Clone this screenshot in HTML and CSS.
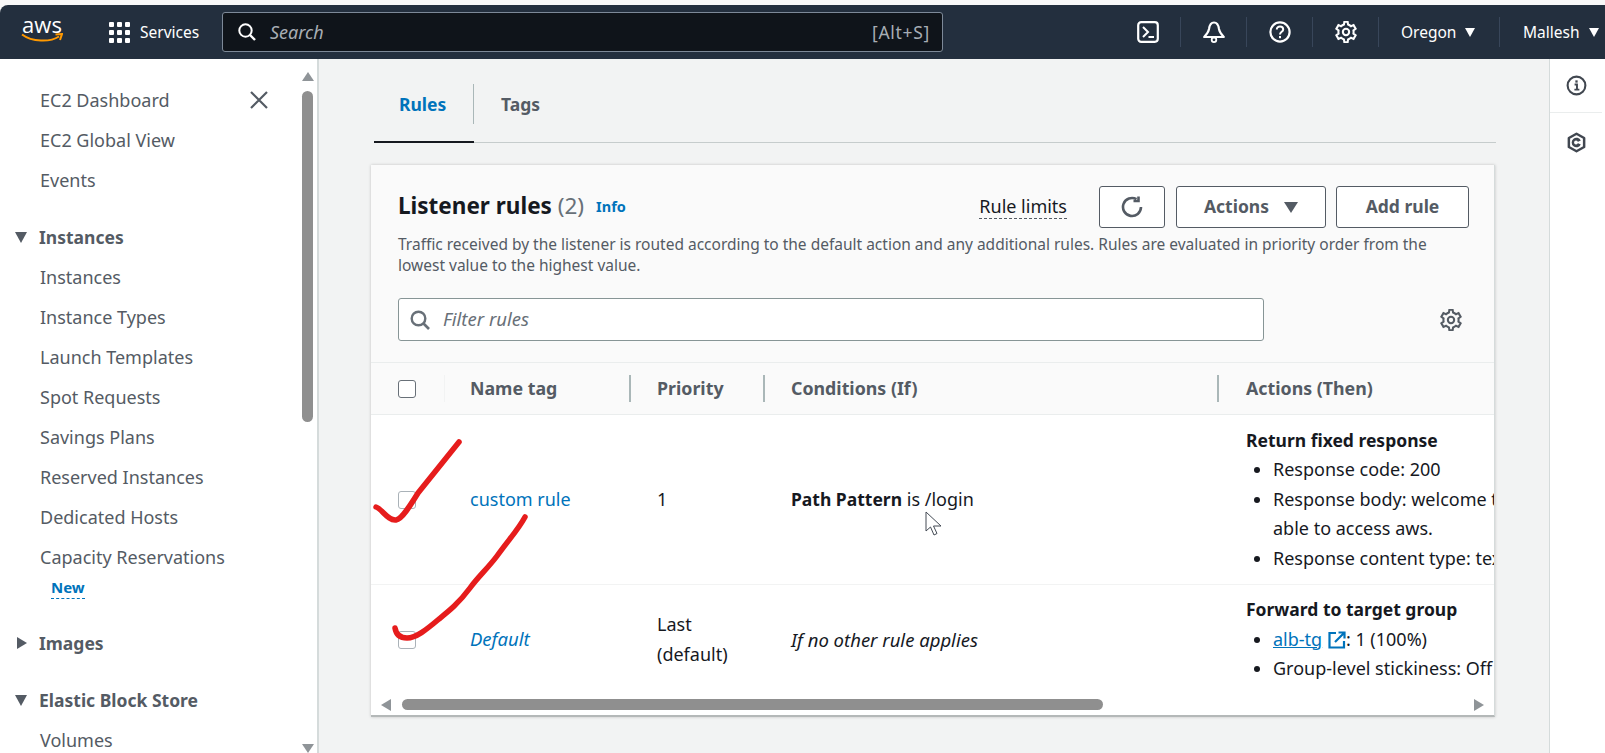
FILE: index.html
```html
<!DOCTYPE html>
<html lang="en">
<head>
    <meta charset="UTF-8">
    <meta name="viewport" content="width=device-width, initial-scale=1.0">
    <title>Listener rules</title>
    <link rel="stylesheet" href="styles.css">
</head>
<body>
<div class="top-strip"></div>
<header class="navbar">
    <div class="logo">
        <span class="logo-text">aws</span>
        <svg class="logo-smile" viewBox="0 0 42 10" width="42" height="10"><path d="M1 1.5C11 9 29 9.5 38 3.5" fill="none" stroke="#f90" stroke-width="2"/><path d="M34.500 1.500L41 1 39 7" fill="none" stroke="#f90" stroke-width="2"/></svg>
    </div>
    <div class="services">
        <div class="grid-icon"><i></i><i></i><i></i><i></i><i></i><i></i><i></i><i></i><i></i></div>
        <span>Services</span>
    </div>
    <div class="search">
        <svg viewBox="0 0 18 18" width="18" height="18"><circle cx="7.500" cy="7.500" r="6.200" fill="none" stroke="#fff" stroke-width="2"/><path d="M12 12l5 5" stroke="#fff" stroke-width="2.400"/></svg>
        <span class="search-text">Search</span>
        <span class="search-key">[Alt+S]</span>
    </div>
    <div class="nav-right">
        <div class="nav-icon">
            <svg viewBox="0 0 22 22" width="22" height="22"><rect x="1.200" y="1.200" width="19.600" height="19.600" rx="3" fill="none" stroke="#fff" stroke-width="2.200"/><path d="M6 6l5 5-5 5M11.500 16H17" fill="none" stroke="#fff" stroke-width="2"/></svg>
        </div>
        <div class="nav-icon">
            <svg viewBox="0 0 22 22" width="22" height="22"><path d="M11 1.500C7.500 1.500 6.500 4.500 6 8 5.500 11 3.500 13.500 1.200 16H20.800C18.500 13.500 16.500 11 16 8 15.500 4.500 14.500 1.500 11 1.500Z" fill="none" stroke="#fff" stroke-width="2.200" stroke-linejoin="round"/><circle cx="11" cy="18.800" r="2.300" fill="none" stroke="#fff" stroke-width="1.800"/></svg>
        </div>
        <div class="nav-icon">
            <svg viewBox="0 0 22 22" width="22" height="22"><circle cx="11" cy="11" r="9.600" fill="none" stroke="#fff" stroke-width="2.200"/><path d="M7.800 8.500C7.800 6.600 9.300 5.600 11 5.600S14.200 6.700 14.200 8.400C14.200 10.800 11 10.800 11 13.400" fill="none" stroke="#fff" stroke-width="2"/><rect x="10" y="15" width="2" height="2.200" fill="#fff"/></svg>
        </div>
        <div class="nav-icon">
            <svg viewBox="0 0 16 16" width="22" height="22"><path class="gear" d="M13.500 8c0-.4 0-.8-.1-1.200l1.600-1.200-1.500-2.600-1.900.8c-.6-.5-1.300-.9-2.100-1.200L9.200.6H6.800l-.3 2c-.8.3-1.500.7-2.100 1.200l-1.900-.8L1 5.600l1.600 1.200c-.1.4-.1.8-.1 1.200s0 .8.1 1.200L1 10.400l1.500 2.600 1.900-.8c.6.500 1.300.9 2.100 1.200l.3 2h2.400l.3-2c.8-.3 1.500-.7 2.100-1.200l1.900.8 1.500-2.600-1.600-1.200c.1-.4.1-.8.1-1.200z" fill="none" stroke="#fff" stroke-width="1.500"/><circle cx="8" cy="8" r="2.300" fill="none" stroke="#fff" stroke-width="1.500"/></svg>
        </div>
        <div class="nav-menu region">Oregon<b class="caret-down"></b></div>
        <div class="nav-menu user">Mallesh<b class="caret-down"></b></div>
    </div>
</header>

<div class="layout">
    <aside class="sidebar">
        <nav class="side-nav">
            <a class="side-item first">EC2 Dashboard
                <svg class="close-x" viewBox="0 0 18 18" width="18" height="18"><path d="M1 1l16 16M17 1L1 17" stroke="#545b64" stroke-width="2.200"/></svg>
            </a>
            <a class="side-item">EC2 Global View</a>
            <a class="side-item">Events</a>
            <div class="side-head"><b class="tri-down"></b>Instances</div>
            <a class="side-item">Instances</a>
            <a class="side-item">Instance Types</a>
            <a class="side-item">Launch Templates</a>
            <a class="side-item">Spot Requests</a>
            <a class="side-item">Savings Plans</a>
            <a class="side-item">Reserved Instances</a>
            <a class="side-item">Dedicated Hosts</a>
            <a class="side-item">Capacity Reservations</a>
            <div class="side-new"><span>New</span></div>
            <div class="side-head images"><b class="tri-right"></b>Images</div>
            <div class="side-head"><b class="tri-down"></b>Elastic Block Store</div>
            <a class="side-item">Volumes</a>
        </nav>
        <div class="side-scroll">
            <b class="arrow-up"></b>
            <div class="side-thumb"></div>
            <b class="arrow-down"></b>
        </div>
    </aside>

    <main class="content">
        <div class="tabs">
            <div class="tab active">Rules</div>
            <div class="tab">Tags</div>
        </div>

        <section class="card">
            <div class="card-head">
                <div class="title-row">
                    <h2 class="card-title">Listener rules <span class="count">(2)</span></h2>
                    <a class="info">Info</a>
                    <a class="limits">Rule limits</a>
                    <button class="btn btn-refresh">
                        <svg viewBox="0 0 22 22" width="22" height="22"><path d="M20 11A9 9 0 1 1 15.500 3.200" fill="none" stroke="#545b64" stroke-width="2.600"/><path d="M16 .5V5H11" transform="translate(1.500 0)" fill="none" stroke="#545b64" stroke-width="2.600"/></svg>
                    </button>
                    <button class="btn btn-actions">Actions<b class="btn-caret"></b></button>
                    <button class="btn btn-add">Add rule</button>
                </div>
                <p class="desc">Traffic received by the listener is routed according to the default action and any additional rules. Rules are evaluated in priority order from the lowest value to the highest value.</p>
                <div class="filter-row">
                    <div class="filter">
                        <svg viewBox="0 0 20 20" width="20" height="20"><circle cx="8.500" cy="8.500" r="6.800" fill="none" stroke="#687078" stroke-width="2.400"/><path d="M13.500 13.500l5.500 5.500" stroke="#687078" stroke-width="2.600"/></svg>
                        <span>Filter rules</span>
                    </div>
                    <svg class="filter-gear" viewBox="0 0 16 16" width="22" height="22"><path d="M13.500 8c0-.4 0-.8-.1-1.200l1.600-1.200-1.500-2.600-1.900.8c-.6-.5-1.300-.9-2.100-1.200L9.200.6H6.800l-.3 2c-.8.3-1.500.7-2.100 1.200l-1.900-.8L1 5.600l1.600 1.200c-.1.4-.1.8-.1 1.200s0 .8.1 1.200L1 10.400l1.500 2.600 1.900-.8c.6.500 1.300.9 2.100 1.200l.3 2h2.400l.3-2c.8-.3 1.500-.7 2.100-1.200l1.900.8 1.500-2.600-1.600-1.200c.1-.4.1-.8.1-1.200z" fill="none" stroke="#545b64" stroke-width="1.500"/><circle cx="8" cy="8" r="2.300" fill="none" stroke="#545b64" stroke-width="1.500"/></svg>
                </div>
            </div>

            <div class="row row-head">
                <div class="cell c-check"><span class="checkbox"></span></div>
                <div class="cell c-name"><span class="th">Name tag</span></div>
                <div class="cell c-prio"><span class="th">Priority</span></div>
                <div class="cell c-cond"><span class="th">Conditions (If)</span></div>
                <div class="cell c-act"><span class="th">Actions (Then)</span></div>
            </div>

            <div class="row row-one">
                <div class="cell c-check"><span class="checkbox"></span></div>
                <div class="cell c-name"><a class="link">custom rule</a></div>
                <div class="cell c-prio">1</div>
                <div class="cell c-cond"><span><b>Path Pattern</b> is /login</span></div>
                <div class="cell c-act">
                    <div>
                        <b>Return fixed response</b>
                        <ul>
                            <li>Response code: 200</li>
                            <li>Response body: welcome to aws you are able to access aws.</li>
                            <li>Response content type: text/plain</li>
                        </ul>
                    </div>
                </div>
            </div>

            <div class="row row-two">
                <div class="cell c-check"><span class="checkbox"></span></div>
                <div class="cell c-name"><a class="link"><i>Default</i></a></div>
                <div class="cell c-prio">Last<br>(default)</div>
                <div class="cell c-cond"><i>If no other rule applies</i></div>
                <div class="cell c-act">
                    <div>
                        <b>Forward to target group</b>
                        <ul>
                            <li><a class="link under">alb-tg</a>
                                <svg class="ext" viewBox="0 0 18 18" width="18" height="18"><path d="M8 2H1.500V16.500H16V10" fill="none" stroke="#0073bb" stroke-width="2.200"/><path d="M7 11L16 2M10.500 1.500H16.500V7.500" fill="none" stroke="#0073bb" stroke-width="2.200"/></svg>: 1 (100%)</li>
                            <li>Group-level stickiness: Off</li>
                        </ul>
                    </div>
                </div>
            </div>

            <div class="table-scroll">
                <b class="arrow-left"></b>
                <div class="table-thumb"></div>
                <b class="arrow-right"></b>
            </div>
        </section>
    </main>

    <aside class="tools">
        <div class="tool tool-info">
            <svg viewBox="0 0 22 22" width="21" height="21"><circle cx="11" cy="11" r="9.300" fill="none" stroke="#414750" stroke-width="2.200"/><path d="M9 10h2.500v5M8.800 15.300h5.200" fill="none" stroke="#414750" stroke-width="2"/><rect x="9.800" y="5.600" width="2.400" height="2.400" fill="#414750"/></svg>
        </div>
        <div class="tool">
            <svg viewBox="0 0 22 22" width="21" height="21"><path d="M11 1.800L19 6.300V15.700L11 20.200 3 15.700V6.300Z" fill="none" stroke="#414750" stroke-width="2.600" stroke-linejoin="round"/><path d="M15.500 9A5 5 0 1 0 15.500 13L11 11Z" fill="#414750"/><circle cx="10.500" cy="11" r="2" fill="#fff"/></svg>
        </div>
    </aside>
</div>

<!-- red ticks and mouse pointer lie on top of the page -->
<svg class="ticks" viewBox="0 0 1605 753" width="1605" height="753">
    <path d="M376 507C382 509 388 521 396 520 402 519 410 506 418 493L459 442" fill="none" stroke="#e61c1c" stroke-width="5.500" stroke-linecap="round" stroke-linejoin="round"/>
    <path d="M525 517C518 530 510 538 497 556 488 568 478 577 470 588 458 604 449 611 439 619 426 630 416 638 407 638 400 638 396 634 395 628" fill="none" stroke="#e61c1c" stroke-width="5.500" stroke-linecap="round" stroke-linejoin="round"/>
    <path d="M926 512V531L930.500 527 934 535 937 533.500 933.500 526H941Z" fill="#fff" stroke="#444b55" stroke-width="1"/>
</svg>
</body>
</html>
```

FILE: styles.css
```css
* {
    box-sizing: border-box;
}

html,
body {
    margin: 0;
    height: 753px;
    overflow: hidden;
}

body {
    font-family: 'Noto Sans', 'Open Sans', sans-serif;
    font-size: 18px;
    color: #16191f;
    background-color: #f8f8f8;
    position: relative;
}

.top-strip {
    height: 5px;
}

/* top bar */
.navbar {
    height: 54px;
    background-color: #232f3e;
    border-radius: 8px 0 0 0;
    display: flex;
    align-items: center;
    color: #fff;
}

.logo {
    width: 42px;
    margin-left: 21px;
    display: flex;
    flex-direction: column;
    align-items: center;
}

.logo-text {
    font-family: 'Open Sans', sans-serif;
    font-size: 22px;
    line-height: 19px;
    margin-top: -6px;
}

.logo-smile {
    margin-top: -1px;
}

.services {
    display: flex;
    align-items: center;
    margin-left: 46px;
    width: 113px;
    font-size: 15.500px;
    gap: 10px;
}

.grid-icon {
    display: grid;
    grid-template-columns: repeat(3, 5px);
    grid-auto-rows: 5px;
    gap: 3px;
}

.grid-icon i {
    background-color: #fff;
    border-radius: 1px;
}

.search {
    width: 721px;
    height: 40px;
    background-color: #0f141a;
    border: 1px solid #7d8998;
    border-radius: 3px;
    display: flex;
    align-items: center;
    padding: 0 12px 0 15px;
}

.search-text {
    font-style: italic;
    color: #a7adb4;
    margin-left: 14px;
    font-size: 18px;
}

.search-key {
    margin-left: auto;
    color: #a7adb4;
    font-size: 17.500px;
    letter-spacing: 0.7px;
}

.nav-right {
    margin-left: auto;
    display: flex;
    align-items: center;
    height: 30px;
}

.nav-icon {
    width: 66px;
    height: 30px;
    display: flex;
    align-items: center;
    justify-content: center;
    border-right: 1px solid #38465a;
}

.nav-menu {
    display: flex;
    align-items: center;
    height: 30px;
    font-size: 15.500px;
}

.region {
    width: 121px;
    padding-left: 22px;
    border-right: 1px solid #38465a;
}

.user {
    width: 105px;
    padding-left: 23px;
}

.caret-down {
    width: 0;
    height: 0;
    margin-left: 9px;
    border-left: 5px solid transparent;
    border-right: 5px solid transparent;
    border-top: 9px solid #fff;
}

/* page below the bar */
.layout {
    display: flex;
    height: 694px;
    background-color: #f2f3f3;
}

.sidebar {
    width: 319px;
    flex-shrink: 0;
    display: flex;
    background-color: #fff;
    border-right: 2px solid #d5dbdb;
    overflow: hidden;
}

.side-nav {
    flex: 1;
    padding-top: 21px;
}

.side-item {
    display: flex;
    align-items: center;
    justify-content: space-between;
    height: 40px;
    padding-left: 40px;
    color: #545b64;
    font-size: 18px;
    white-space: nowrap;
}

.close-x {
    margin-right: 33px;
}

.side-head {
    display: flex;
    align-items: center;
    height: 40px;
    margin-top: 17px;
    padding-left: 15px;
    color: #545b64;
    font-weight: 700;
    font-size: 17.500px;
}

.side-head.images {
    margin-top: 23px;
}

.tri-down {
    width: 0;
    height: 0;
    margin-right: 12px;
    border-left: 6.500px solid transparent;
    border-right: 6.500px solid transparent;
    border-top: 11px solid #545b64;
}

.tri-right {
    width: 0;
    height: 0;
    margin-left: 2px;
    margin-right: 12px;
    border-top: 6.500px solid transparent;
    border-bottom: 6.500px solid transparent;
    border-left: 10px solid #545b64;
}

.side-new {
    height: 23px;
    padding-left: 51px;
    font-size: 15px;
    line-height: 21px;
    font-weight: 700;
    color: #0073bb;
}

.side-new span {
    display: inline-block;
    border-bottom: 1px dashed #0073bb;
}

.side-scroll {
    width: 13px;
    margin-right: 3px;
    display: flex;
    flex-direction: column;
    align-items: center;
    padding-top: 13px;
}

.arrow-up {
    width: 0;
    height: 0;
    border-left: 6.500px solid transparent;
    border-right: 6.500px solid transparent;
    border-bottom: 9px solid #8f9498;
}

.arrow-down {
    width: 0;
    height: 0;
    margin-top: 322px;
    border-left: 6.500px solid transparent;
    border-right: 6.500px solid transparent;
    border-top: 9px solid #8f9498;
}

.side-thumb {
    width: 11px;
    height: 331px;
    margin-top: 10px;
    background-color: #8f8f8f;
    border-radius: 6px;
}

.content {
    flex: 1;
    padding: 0 53px 0 52px;
}

.tabs {
    display: flex;
    height: 84px;
    margin-left: 3px;
    padding-top: 25px;
    border-bottom: 1px solid #c6cccc;
}

.tab {
    height: 59px;
    padding: 0 27px 19px;
    display: flex;
    align-items: center;
    font-weight: 700;
    font-size: 17.500px;
    color: #545b64;
}

.tab.active {
    position: relative;
    width: 100px;
    padding-left: 25px;
    padding-bottom: 17px;
    color: #0073bb;
    border-bottom: 2px solid #16191f;
}

.tab.active::after {
    content: '';
    position: absolute;
    right: 0;
    top: 0;
    height: 40px;
    border-right: 1px solid #aab7b8;
}

.card {
    margin-top: 22px;
    width: 1124px;
    height: 552px;
    background-color: #fff;
    border-bottom: 2px solid #b4b8b8;
    border-right: 1px solid #d5dbdb;
    box-shadow: 0 0 3px rgba(0, 0, 0, 0.2);
    overflow: hidden;
    display: flex;
    flex-direction: column;
}

.card-head {
    height: 198px;
    padding: 21px 25px 0 27px;
    background-color: #fafafa;
    border-bottom: 1px solid #eaeded;
}

.title-row {
    display: flex;
    align-items: center;
    height: 42px;
}

.card-title {
    margin: -4px 0 0;
    font-size: 22.500px;
    font-weight: 700;
    white-space: nowrap;
}

.count {
    font-weight: 400;
    color: #687078;
}

.info {
    margin-left: 12px;
    margin-top: -2px;
    font-size: 14.500px;
    font-weight: 700;
    color: #0073bb;
}

.limits {
    margin-left: auto;
    margin-right: 32px;
    font-size: 18px;
    color: #16191f;
    border-bottom: 1px dashed #545b64;
    line-height: 23px;
}

.btn {
    height: 42px;
    background-color: #fff;
    border: 1px solid #545b64;
    border-radius: 3px;
    font-family: inherit;
    font-size: 17.500px;
    font-weight: 700;
    color: #545b64;
    display: flex;
    align-items: center;
    justify-content: center;
    padding: 0 0 3px;
}

.btn-refresh {
    width: 66px;
    padding-bottom: 0;
}

.btn-actions {
    width: 150px;
    margin-left: 11px;
}

.btn-add {
    width: 133px;
    margin-left: 10px;
}

.btn-caret {
    width: 0;
    height: 0;
    margin-left: 15px;
    margin-top: 3px;
    border-left: 7px solid transparent;
    border-right: 7px solid transparent;
    border-top: 11px solid #545b64;
}

.desc {
    margin: 6px 0 0;
    width: 1050px;
    font-size: 15.500px;
    line-height: 20.500px;
    color: #545b64;
}

.filter-row {
    display: flex;
    align-items: center;
    margin-top: 23px;
}

.filter {
    width: 866px;
    height: 43px;
    background-color: #fff;
    border: 1px solid #879596;
    border-radius: 3px;
    display: flex;
    align-items: center;
    padding: 0 0 2px 11px;
    gap: 13px;
    font-style: italic;
    color: #687078;
    font-size: 18.500px;
}

.filter svg {
    margin-top: 2px;
}

.filter-gear {
    margin-left: 176px;
}

.row {
    display: flex;
    width: 1300px;
    flex-shrink: 0;
}

.row-head {
    height: 52px;
    background-color: #fafafa;
    border-bottom: 1px solid #eaeded;
    align-items: center;
}

.row-one {
    height: 170px;
    border-bottom: 1px solid #f2f3f3;
}

.row-two {
    height: 109px;
}

.cell {
    display: flex;
    align-items: center;
    line-height: 29.500px;
    font-size: 18px;
}

.cell b {
    font-size: 17.500px;
}

.cell i {
    font-size: 18.500px;
}

.row-head .cell {
    height: 27px;
    border-left: 2px solid #aab7b8;
}

.row-head .c-check {
    border-left: none;
}

.row-head .c-name {
    padding-left: 25px;
    border-left: 1px solid #f2f3f3;
}

.th {
    font-weight: 700;
    font-size: 17.800px;
    color: #545b64;
}

.c-check {
    width: 73px;
    padding-left: 27px;
}

.c-name {
    width: 185px;
    padding-left: 26px;
}

.c-prio {
    width: 134px;
    padding-left: 28px;
}

.row-head .c-prio,
.row-head .c-cond {
    padding-left: 26px;
}

.c-cond {
    width: 454px;
    padding-left: 28px;
}

.c-act {
    width: 453px;
    padding-left: 29px;
}

.row-head .c-act {
    padding-left: 27px;
}

.checkbox {
    display: block;
    width: 18px;
    height: 18px;
    background-color: #fff;
    border: 1.500px solid #687078;
    border-radius: 3px;
}

.row-two .checkbox,
.row-one .checkbox {
    border-color: #aab2b8;
}

.link {
    color: #0073bb;
}

.link.under {
    text-decoration: underline;
}

.ext {
    vertical-align: -3px;
    margin-left: 1px;
}

.c-act ul {
    margin: 0;
    padding: 0 0 0 27px;
    width: 377px;
}

.table-scroll {
    flex: 1;
    display: flex;
    align-items: center;
    padding: 0 10px 0 10px;
    background-color: #fff;
}

.table-thumb {
    width: 701px;
    height: 11px;
    margin-left: 11px;
    background-color: #8f8f8f;
    border-radius: 6px;
}

.arrow-left {
    width: 0;
    height: 0;
    border-top: 6px solid transparent;
    border-bottom: 6px solid transparent;
    border-right: 10px solid #8f9498;
}

.arrow-right {
    width: 0;
    height: 0;
    margin-left: auto;
    border-top: 6px solid transparent;
    border-bottom: 6px solid transparent;
    border-left: 10px solid #8f9498;
}

/* right hand tool rail */
.tools {
    width: 56px;
    flex-shrink: 0;
    background-color: #fff;
    border-left: 1px solid #d5dbdb;
}

.tool {
    display: flex;
    justify-content: center;
    align-items: center;
    padding-right: 3px;
    height: 58px;
}

.tool-info {
    height: 54px;
    margin-right: 3px;
    padding-right: 0;
    border-bottom: 1px solid #eaeded;
}

.ticks {
    position: absolute;
    left: 0;
    top: 0;
    pointer-events: none;
}
```
